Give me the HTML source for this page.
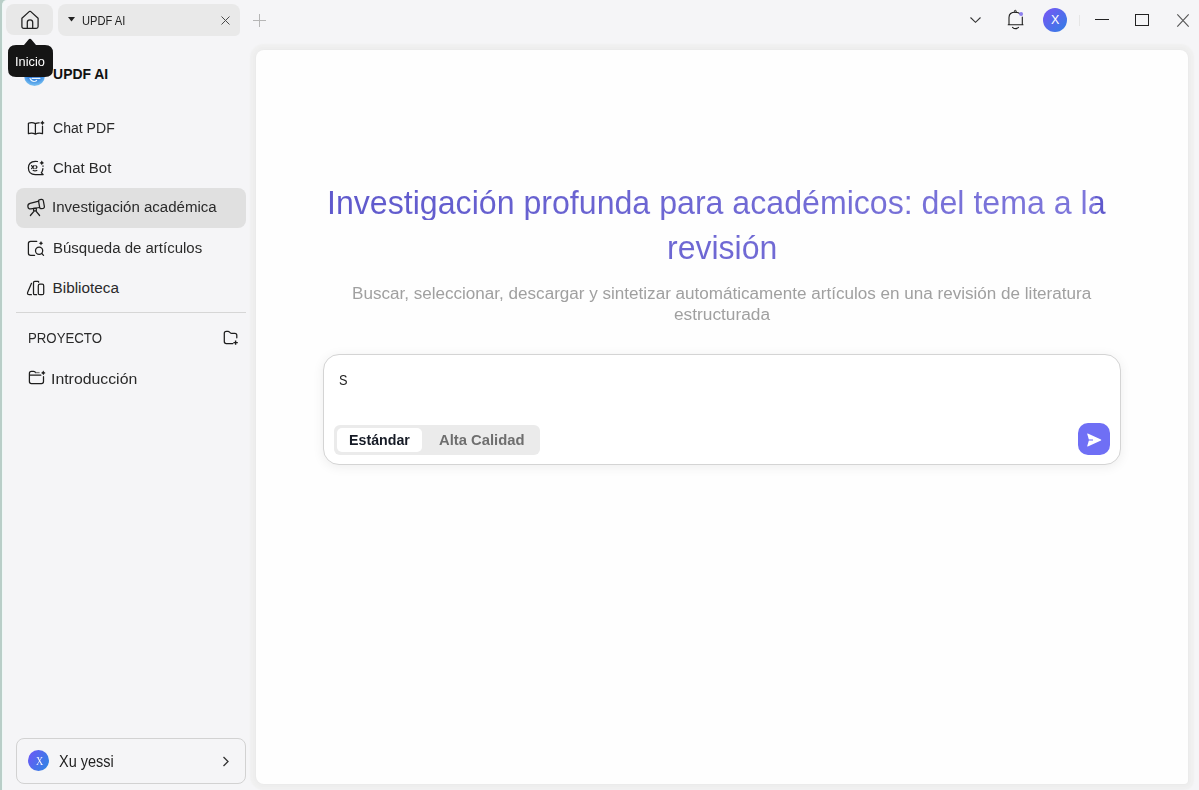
<!DOCTYPE html>
<html><head><meta charset="utf-8">
<style>
*{box-sizing:border-box;margin:0;padding:0}
html,body{width:1199px;height:790px;overflow:hidden;background:#b9cec8}
body{font-family:"Liberation Sans",sans-serif;position:relative;color:#222}
.abs{position:absolute}
#win{position:absolute;left:2px;top:0;width:1197px;height:790px;background:#f5f5f7;border-top-left-radius:5px;border-left:1px solid #eef8f6}
#side{position:absolute;left:3px;top:40px;width:253px;height:750px;background:#f5f5f7}
.t{position:absolute;white-space:nowrap;line-height:1;transform-origin:0 0}
svg{position:absolute;overflow:visible}
#panel{position:absolute;left:256px;top:50px;width:932px;height:734px;background:#fefefe;border-radius:8px;box-shadow:0 0 0 1px #ebebeb,0 0 0 3px #eeeeee,0 0 1.5px 6px #f0f0f0;border-bottom-right-radius:4px}
.nav{font-size:14.8px;color:#2a2a2a}
.ic{fill:none;stroke:#1e1e1e;stroke-width:1.25;stroke-linecap:round;stroke-linejoin:round}
.grad{background:linear-gradient(90deg,#5f59cc,#7e77db);-webkit-background-clip:text;background-clip:text;color:transparent}
.sub{color:#a0a0a0}
</style></head>
<body>
<div id="win"></div>
<div id="side"></div>

<!-- tabs -->
<div class="abs" style="left:6px;top:4px;width:47px;height:31px;background:#e8e8e8;border-radius:8px"></div>
<svg style="left:21px;top:11px" width="18" height="18" viewBox="0 0 18 18"><path class="ic" d="M0.9 7.2 L8.2 0.6 Q9 0 9.8 0.6 L17.1 7.2 V15.5 Q17.1 17.3 15.3 17.3 H2.7 Q0.9 17.3 0.9 15.5 Z M6.3 17.3 V11.3 Q6.3 8.9 9 8.9 Q11.7 8.9 11.7 11.3 V17.3"/></svg>
<div class="abs" style="left:58px;top:4px;width:182px;height:32px;background:#e9e9e9;border-radius:8px 8px 5px 8px"></div>
<svg style="left:68px;top:17px" width="7" height="5" viewBox="0 0 7 5"><path d="M0 0 H7 L3.5 4.5Z" fill="#222"/></svg>
<div class="t" style="left:81.9px;top:14.5px;font-size:12.5px;color:#222;transform:scaleX(0.89)">UPDF AI</div>
<svg style="left:221px;top:16px" width="9" height="9" viewBox="0 0 9 9"><path d="M0.5 0.5 L8.5 8.5 M8.5 0.5 L0.5 8.5" stroke="#4a4a4a" stroke-width="1" fill="none"/></svg>
<svg style="left:253px;top:14px" width="13" height="13" viewBox="0 0 13 13"><path d="M6.5 0 V13 M0 6.5 H13" stroke="#b6b6b6" stroke-width="1" fill="none"/></svg>

<!-- right controls -->
<svg style="left:970px;top:17px" width="11" height="6" viewBox="0 0 11 6"><path d="M0.5 0.5 L5.5 5.3 L10.5 0.5" stroke="#333" stroke-width="1.1" fill="none"/></svg>
<svg style="left:1007px;top:9px" width="18" height="21" viewBox="0 0 18 21"><path d="M2 15.7 V8.5 Q2 3.2 8.3 3.2 Q11.5 3.2 13 4.8 M15.3 8 V15.7 M1.2 15.7 H16 M5.5 18.3 Q8.5 21 11.5 18.3" stroke="#1e1e1e" stroke-width="1.1" fill="none" stroke-linecap="round"/><circle cx="8.3" cy="2.3" r="1" stroke="#1e1e1e" stroke-width="0.9" fill="none"/><circle cx="14.1" cy="4.9" r="2" fill="#8e80ee"/></svg>
<div class="abs" style="left:1043px;top:8px;width:24px;height:24px;border-radius:50%;background:linear-gradient(135deg,#7a55f5,#2f7fe4)"></div>
<div class="t" style="left:1051px;top:14px;font-size:12.5px;color:#fff">X</div>
<div class="abs" style="left:1079px;top:15px;width:1px;height:11px;background:#e6e6e6"></div>
<div class="abs" style="left:1095px;top:19px;width:14px;height:1.3px;background:#222"></div>
<div class="abs" style="left:1135px;top:14px;width:14px;height:12px;border:1.3px solid #222"></div>
<svg style="left:1177px;top:14px" width="12" height="13" viewBox="0 0 12 13"><path d="M0.3 0.3 L11.7 12.7 M11.7 0.3 L0.3 12.7" stroke="#555" stroke-width="1.1" fill="none"/></svg>

<!-- logo + title -->
<div class="abs" style="left:24px;top:65px;width:21px;height:21px;border-radius:50%;background:radial-gradient(circle at 50% 30%,#1d4fc0 0%,#2f7fde 45%,#6fb8ef 75%,#cde9fb 100%)"></div><svg style="left:24px;top:65px" width="21" height="21" viewBox="0 0 21 21"><path d="M6 13.5 Q7.5 16.5 10 16.5 Q11.5 16.5 12.6 15.5 M8 13.3 H16" stroke="#e8f6ff" stroke-width="1.2" fill="none" stroke-linecap="round"/></svg>
<div class="t" style="left:53.1px;top:68.2px;font-size:13.9px;font-weight:700;color:#111">UPDF AI</div>

<!-- tooltip -->
<svg style="left:8px;top:38px" width="46" height="40" viewBox="0 0 46 40"><path d="M8 7 H16 L20.6 1.4 Q22 0 23.4 1.4 L28 7 H37 Q45 7 45 15 V31 Q45 39 37 39 H8 Q0 39 0 31 V15 Q0 7 8 7 Z" fill="#151515"/></svg>
<div class="t" style="left:15.4px;top:55.5px;font-size:12.2px;color:#fff;transform:scaleX(1.05)">Inicio</div>

<!-- nav -->
<svg style="left:27px;top:121px" width="18" height="15" viewBox="0 0 18 15"><path class="ic" d="M1.4 2.3 Q4.9 0.6 8.4 2.6 V13.2 Q4.9 11.3 1.4 12.7 Z M8.4 2.6 Q10.3 1.6 12.2 1.8 M15.5 5.2 V12.7 Q11.9 11.3 8.4 13.2"/><path d="M15.4 -0.3999999999999999 Q15.975 1.325 17.7 1.9 Q15.975 2.4749999999999996 15.4 4.199999999999999 Q14.825000000000001 2.4749999999999996 13.100000000000001 1.9 Q14.825000000000001 1.325 15.4 -0.3999999999999999Z" fill="#1e1e1e"/></svg>
<div class="t nav" style="left:52.9px;top:119.5px;font-size:15.2px;transform:scaleX(0.926)">Chat PDF</div>

<svg style="left:27px;top:160px" width="18" height="16" viewBox="0 0 18 16"><path class="ic" d="M10.5 1.5 Q9.5 1.3 8.3 1.3 Q1.4 1.6 1.4 8 Q1.6 14.6 8.3 14.6 H16.2 L14.3 12.8 Q15.7 11 15.9 8.6 M16 6.3 V5.8"/><path class="ic" d="M4.6 5.6 L7 8.6 M7 5.6 L4.6 8.6 M8.9 5.7 Q11 7.1 8.9 8.5 M6.2 10.5 Q8 11.2 9.8 10.5" stroke-width="1.1"/><path d="M14.8 0.6000000000000001 Q15.375 2.325 17.1 2.9 Q15.375 3.4749999999999996 14.8 5.199999999999999 Q14.225000000000001 3.4749999999999996 12.5 2.9 Q14.225000000000001 2.325 14.8 0.6000000000000001Z" fill="#1e1e1e"/></svg>
<div class="t nav" style="left:52.8px;top:160.5px;font-size:14.7px;transform:scaleX(1.02)">Chat Bot</div>

<div class="abs" style="left:16px;top:188px;width:230px;height:40px;background:#e0e0e0;border-radius:8px"></div>
<svg style="left:27px;top:199px" width="19" height="18" viewBox="0 0 19 18"><path class="ic" d="M11.8 2.2 L3 4.3 Q0.6 4.9 0.9 7.6 Q1.3 10.3 3.8 9.9 L12.6 8.5"/><path class="ic" d="M11.6 2.4 Q11.4 0.9 12.8 0.7 L14.6 0.4 Q16 0.3 16.3 1.7 L17.4 7.7 Q17.6 9 16.3 9.3 L14.3 9.7 Q13 9.9 12.7 8.6 Z"/><path class="ic" d="M6.6 9.3 H9.3 V11.8 H6.6 Z M7.3 11.8 L3.4 16.5 M8.8 11.8 L12.6 16.5"/></svg>
<div class="t nav" style="left:52.1px;top:199.1px;font-size:15.2px;transform:scaleX(0.99)">Investigación académica</div>

<svg style="left:27px;top:240px" width="18" height="17" viewBox="0 0 18 17"><path class="ic" d="M9.8 1.3 H3.6 Q1.4 1.3 1.4 3.5 V13.2 Q1.4 15.3 3.6 15.3 H7.6"/><circle class="ic" cx="12.1" cy="10.7" r="3.6"/><path class="ic" d="M14.8 13.5 L16.5 15.4"/><path d="M14 1.0999999999999996 Q14.55 2.75 16.2 3.3 Q14.55 3.8499999999999996 14 5.5 Q13.45 3.8499999999999996 11.8 3.3 Q13.45 2.75 14 1.0999999999999996Z" fill="#1e1e1e"/></svg>
<div class="t nav" style="left:52.7px;top:239.6px;font-size:15.3px;transform:scaleX(0.98)">Búsqueda de artículos</div>

<svg style="left:27px;top:280px" width="18" height="16" viewBox="0 0 18 16"><path class="ic" d="M4.5 3.3 L0.6 12.6 Q0.1 14.7 2.2 14.7 H4.4"/><path class="ic" d="M11.6 2.2 V1.6 Q11.6 1.3 11.2 1.3 H7.8 Q6.5 1.3 6.5 2.6 V13.4 Q6.5 14.7 7.8 14.7 H9.6"/><rect class="ic" x="11.3" y="4.2" width="5.4" height="10.5" rx="1.5"/></svg>
<div class="t nav" style="left:52.6px;top:279.5px;font-size:15.3px">Biblioteca</div>

<div class="abs" style="left:16px;top:312px;width:230px;height:1px;background:#d6d6d6"></div>

<div class="t nav" style="left:27.5px;top:329.9px;font-size:15.2px;transform:scaleX(0.87)">PROYECTO</div>
<svg style="left:223px;top:330px" width="18" height="16" viewBox="0 0 18 16"><path class="ic" d="M9.9 13.5 H3.3 Q1.3 13.5 1.3 11.5 V3.3 Q1.3 1.3 3.3 1.3 H5 Q5.9 1.3 6.6 2.1 L7.1 2.6 Q7.8 3.3 8.7 3.3 H11.8 Q13.8 3.3 13.8 5.3 V7.8"/><path d="M12.6 10.4 V14.8 M10.4 12.6 H14.8" stroke="#1e1e1e" stroke-width="1.4" fill="none"/></svg>

<svg style="left:27px;top:370px" width="18" height="16" viewBox="0 0 18 16"><path class="ic" d="M8.7 2.6 L7.8 1.8 Q7.3 1.4 6.6 1.4 H4.4 Q2.4 1.4 2.4 3.4 V11.5 Q2.4 13.5 4.4 13.5 H14.5 Q16.5 13.5 16.5 11.5 V6.7 M2.4 5.2 H13.8"/><path d="M8.7 2.6 H12.6" stroke="#7a7a7a" stroke-width="1.3"/><path d="M16.3 0.6000000000000001 Q16.875 2.325 18.6 2.9 Q16.875 3.4749999999999996 16.3 5.199999999999999 Q15.725000000000001 3.4749999999999996 14.0 2.9 Q15.725000000000001 2.325 16.3 0.6000000000000001Z" fill="#1e1e1e"/></svg>
<div class="t nav" style="left:51.4px;top:371.5px;font-size:14.8px;transform:scaleX(1.07)">Introducción</div>

<!-- user card -->
<div class="abs" style="left:16px;top:738px;width:230px;height:46px;border:1px solid #d2d2d2;border-radius:8px;background:#f5f5f7"></div>
<div class="abs" style="left:28px;top:750px;width:21px;height:21px;border-radius:50%;background:linear-gradient(120deg,#6f55f7,#2a88e2)"></div>
<div class="t" style="left:35.6px;top:755.6px;font-size:11.8px;color:#f4f4ff;font-family:'Liberation Serif',serif;transform:scaleX(0.85)">X</div>
<div class="t" style="left:58.6px;top:754.3px;font-size:15.6px;color:#222;transform:scaleX(0.93)">Xu yessi</div>
<svg style="left:222px;top:756px" width="8" height="11" viewBox="0 0 8 11"><path d="M1.5 1 L6 5.5 L1.5 10" stroke="#333" stroke-width="1.3" fill="none"/></svg>

<div id="panel"></div>

<!-- hero -->
<div class="t grad" style="left:326.7px;top:187.2px;font-size:32.6px;transform:scaleX(0.986);background-size:779px 100%">Investigación profunda para académicos: del tema a la</div>
<div class="t grad" style="left:666.6px;top:231.5px;font-size:32.6px;transform:scaleX(0.983);background-size:779px 100%;background-position:-340px 0">revisión</div>
<div class="t sub" style="left:351.9px;top:286.1px;font-size:16px;transform:scaleX(1.067)">Buscar, seleccionar, descargar y sintetizar automáticamente artículos en una revisión de literatura</div>
<div class="t sub" style="left:673.8px;top:306.9px;font-size:16px;transform:scaleX(1.08)">estructurada</div>

<!-- input -->
<div class="abs" style="left:323px;top:354px;width:798px;height:111px;border:1px solid #d4d4d4;border-radius:16px;background:#fff;box-shadow:0 2px 12px rgba(0,0,0,0.07)"></div>
<div class="t" style="left:339.3px;top:373px;font-size:14.9px;color:#222;transform:scaleX(0.855)">S</div>
<div class="abs" style="left:334px;top:425px;width:206px;height:30px;background:#ebebeb;border-radius:6px"></div>
<div class="abs" style="left:337px;top:428px;width:85px;height:24px;background:#fff;border-radius:5px"></div>
<div class="t" style="left:348.5px;top:432.7px;font-size:14.9px;font-weight:700;color:#161b26;transform:scaleX(0.955)">Estándar</div>
<div class="t" style="left:439.4px;top:432.7px;font-size:14.9px;font-weight:700;color:#6e6e6e;transform:scaleX(0.993)">Alta Calidad</div>
<div class="abs" style="left:1078px;top:423px;width:32px;height:32px;background:#6f6ff5;border-radius:10px"></div>
<svg style="left:1086px;top:432px" width="16" height="16" viewBox="0 0 16 16"><path d="M1.8 1.6 Q1 1.3 1.3 2.2 L3 8 L1.3 13.8 Q1 14.7 1.8 14.4 L15 8.4 Q15.6 8 15 7.6 Z" fill="#fff"/><path d="M2.5 8 H7" stroke="#6f6ff5" stroke-width="1.1"/></svg>

</body></html>
